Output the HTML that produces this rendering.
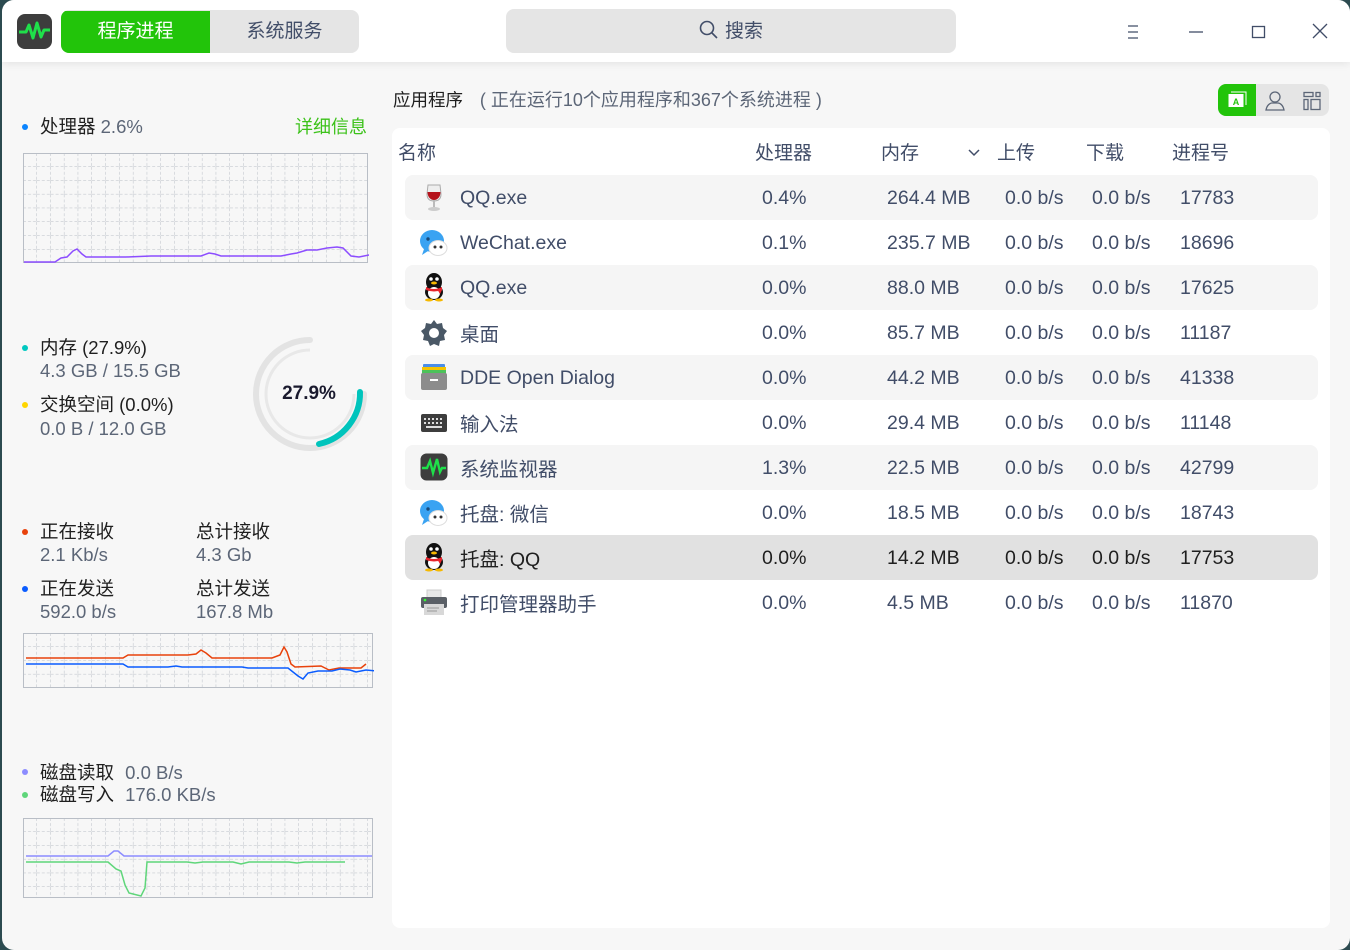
<!DOCTYPE html>
<html><head><meta charset="utf-8"><style>
*{margin:0;padding:0;box-sizing:border-box}
body{width:1350px;height:950px;background:#2c4b50;font-family:"Liberation Sans","Noto Sans CJK SC",sans-serif;position:relative;overflow:hidden}
.win{position:absolute;left:2px;top:0;width:1348px;height:950px;background:#f7f7f7;border-radius:12px;overflow:hidden}
.hdr{position:absolute;left:0;top:0;width:100%;height:62px;background:#fff;box-shadow:0 2px 8px rgba(0,0,0,.08)}
.a{position:absolute;white-space:nowrap}
.dot{position:absolute;width:6px;height:6px;border-radius:50%}
.lbl{font-size:18.5px;color:#1f1f1f}
.sub{font-size:18.5px;color:#5c6677}
.card{position:absolute;left:390px;top:128px;width:938px;height:800px;background:#fff;border-radius:8px}
.th{font-size:19px;color:#414d68;top:138px}
.row{position:absolute;left:403px;width:913px;height:45px;border-radius:8px}
.c{position:absolute;font-size:19.5px;color:#414d68;white-space:nowrap}
</style></head><body>
<div class="win">
<div class="hdr">
 <svg class="a" style="left:14px;top:13px" width="37" height="37" viewBox="0 0 37 37"><rect x="1" y="1" width="35" height="35" rx="8" fill="#3d3d3d"/><path d="M3 19h7l3-7 4 13 4-15 4 14 3-7h6" stroke="#1fe04a" stroke-width="3" fill="none" stroke-linejoin="round"/></svg>
 <div class="a" style="left:59px;top:10px;width:298px;height:43px;border-radius:8px;background:#e5e5e5;overflow:hidden">
  <div class="a" style="left:0;top:1px;width:149px;height:43px;background:#22c40a;color:#fff;font-size:19px;text-align:center;line-height:41px">程序进程</div>
  <div class="a" style="left:149px;top:1px;width:149px;height:43px;color:#414d68;font-size:19px;text-align:center;line-height:41px">系统服务</div>
 </div>
 <div class="a" style="left:504px;top:9px;width:450px;height:44px;border-radius:8px;background:#e5e5e5;color:#414d68;font-size:19px;line-height:46px;text-align:center">
  <svg width="20" height="20" viewBox="0 0 20 20" style="vertical-align:-3px;margin-right:6px"><circle cx="8" cy="8" r="6.5" stroke="#414d68" stroke-width="1.6" fill="none"/><path d="M13 13l5 5" stroke="#414d68" stroke-width="1.6"/></svg>搜索</div>
 <svg class="a" style="left:1120px;top:22px" width="20" height="20"><path d="M6 4h10M6 10h10M6 16h10" stroke="#414d68" stroke-width="1.3"/></svg>
 <svg class="a" style="left:1184px;top:22px" width="20" height="20"><path d="M3 10h14" stroke="#414d68" stroke-width="1.3"/></svg>
 <svg class="a" style="left:1247px;top:22px" width="20" height="20"><rect x="3.5" y="4.5" width="12" height="11" stroke="#414d68" stroke-width="1.3" fill="none"/></svg>
 <svg class="a" style="left:1308px;top:21px" width="20" height="20"><path d="M3 3l14 14M17 3L3 17" stroke="#414d68" stroke-width="1.3"/></svg>
</div>

<!-- left panel -->
<div class="dot" style="left:20px;top:124px;background:#0a84ff"></div>
<div class="a lbl" style="left:38px;top:113px">处理器 <span style="color:#5c6677">2.6%</span></div>
<div class="a" style="left:293px;top:113px;font-size:18px;color:#3cc21a">详细信息</div>
<svg class="a" style="left:21px;top:153px" width="346" height="111">
 <defs><pattern id="g" width="13.8" height="13.8" patternUnits="userSpaceOnUse"><path d="M13.8 0V13.8M0 13.8H13.8" stroke="#b9bec6" stroke-width="1" stroke-dasharray="3 2" fill="none"/></pattern></defs>
 <rect x="0.5" y="0.5" width="344" height="109" fill="url(#g)" stroke="#b9bec6"/>
 <path d="M1 109H32l6-4 6-1 6-6 4-2 5 5 4 3h40l25-1h50l8-3 6 1 6 2h60l10-2 6-1 10-3h10l10-2 10-1 6 1 8 8 8 1 10-2h14" stroke="#8c4dff" stroke-width="1.5" fill="none"/>
</svg>

<div class="dot" style="left:20px;top:345px;background:#00c8c0"></div>
<div class="a lbl" style="left:38px;top:334px">内存 (27.9%)</div>
<div class="a sub" style="left:38px;top:360px">4.3 GB / 15.5 GB</div>
<div class="dot" style="left:20px;top:402px;background:#ffd600"></div>
<div class="a lbl" style="left:38px;top:391px">交换空间 (0.0%)</div>
<div class="a sub" style="left:38px;top:418px">0.0 B / 12.0 GB</div>
<svg class="a" style="left:248px;top:334px" width="120" height="120" viewBox="0 0 120 120">
 <path d="M60 6A54 54 0 1 0 114 60" stroke="#e3e3e3" stroke-width="6" fill="none" stroke-linecap="round"/>
 <path d="M60 16A44 44 0 1 0 104 60" stroke="#e8e8e8" stroke-width="3" fill="none"/>
 <path d="M110 58A52 52 0 0 1 69 110" stroke="#00c4bc" stroke-width="6" fill="none" stroke-linecap="round"/>
 <text x="59" y="65" text-anchor="middle" font-size="19" font-weight="bold" fill="#1a1a2e" font-family="Liberation Sans">27.9%</text>
</svg>

<div class="dot" style="left:20px;top:529px;background:#e8420c"></div>
<div class="a lbl" style="left:38px;top:518px">正在接收</div>
<div class="a sub" style="left:38px;top:544px">2.1 Kb/s</div>
<div class="a lbl" style="left:194px;top:518px">总计接收</div>
<div class="a sub" style="left:194px;top:544px">4.3 Gb</div>
<div class="dot" style="left:20px;top:586px;background:#0a5cff"></div>
<div class="a lbl" style="left:38px;top:575px">正在发送</div>
<div class="a sub" style="left:38px;top:601px">592.0 b/s</div>
<div class="a lbl" style="left:194px;top:575px">总计发送</div>
<div class="a sub" style="left:194px;top:601px">167.8 Mb</div>
<svg class="a" style="left:21px;top:633px" width="351" height="56">
 <rect x="0.5" y="0.5" width="349" height="54" fill="url(#g)" stroke="#b9bec6"/>
 <path d="M3 25H100l5-3h60l8-1 5-4 5 3 6 5h60l8-3 4-8 3 5 4 12 4 3 26-1 8 4 10-2h22l5-4" stroke="#e8420c" stroke-width="1.5" fill="none"/>
 <path d="M3 31H100l5 3h40l8-1 6 1h60l6 1h40l10 8 5 3 5-6 10-2h14l8-2 10 1 6 2 10-2 10 1h18" stroke="#0a5cff" stroke-width="1.5" fill="none"/>
</svg>

<div class="dot" style="left:20px;top:769px;background:#8c8cff"></div>
<div class="a lbl" style="left:38px;top:759px">磁盘读取 <span style="color:#5c6677;margin-left:6px">0.0 B/s</span></div>
<div class="dot" style="left:20px;top:792px;background:#5fd67a"></div>
<div class="a lbl" style="left:38px;top:781px">磁盘写入 <span style="color:#5c6677;margin-left:6px">176.0 KB/s</span></div>
<svg class="a" style="left:21px;top:818px" width="351" height="81">
 <rect x="0.5" y="0.5" width="349" height="79" fill="url(#g)" stroke="#b9bec6"/>
 <path d="M3 38H85l6-5h4l6 5h248" stroke="#8c8cff" stroke-width="1.5" fill="none"/>
 <path d="M3 44H85l8 7 5 2 4 14 4 8 12 3 4-8 2-26h40l8 1 8-1h30l8 2 8-2h40l8 1 8-1h40" stroke="#5fd67a" stroke-width="1.5" fill="none"/>
</svg>

<!-- right -->
<div class="a" style="left:391px;top:86px;font-size:17.5px;color:#1f1f1f">应用程序 <span style="color:#5c6677;margin-left:12px;font-size:18px">( 正在运行10个应用程序和367个系统进程 )</span></div>
<div class="a" style="left:1216px;top:84px;width:111px;height:32px;border-radius:8px;background:#e5e5e5;overflow:hidden">
 <div class="a" style="left:0;top:0;width:38px;height:32px;background:#22c40a"></div>
 <svg class="a" style="left:10px;top:7px" width="20" height="18"><rect x="0.5" y="3" width="15" height="13" fill="#fff"/><path d="M3 1h15v13" stroke="#fff" fill="none"/><text x="8" y="14" text-anchor="middle" font-size="9" fill="#22c40a" font-family="Liberation Sans" font-weight="bold">A</text></svg>
 <svg class="a" style="left:46px;top:6px" width="22" height="22"><circle cx="11" cy="7" r="5" stroke="#5c6677" stroke-width="1.3" fill="none"/><path d="M2 20c1-5 4-7 6-7h6c2 0 5 2 6 7z" stroke="#5c6677" stroke-width="1.3" fill="none"/></svg>
 <svg class="a" style="left:84px;top:7px" width="20" height="20"><rect x="2" y="1.5" width="9" height="4" stroke="#5c6677" stroke-width="1.3" fill="none"/><rect x="14" y="1.5" width="4" height="4" stroke="#5c6677" stroke-width="1.3" fill="none"/><rect x="2" y="8.5" width="4" height="10" stroke="#5c6677" stroke-width="1.3" fill="none"/><rect x="9" y="8.5" width="9" height="10" stroke="#5c6677" stroke-width="1.3" fill="none"/></svg>
</div>
<div class="card"></div>
<div class="a th" style="left:396px">名称</div>
<div class="a th" style="left:753px">处理器</div>
<div class="a th" style="left:879px">内存</div>
<svg class="a" style="left:964px;top:144px" width="16" height="16"><path d="M3 6l5 5 5-5" stroke="#414d68" stroke-width="1.5" fill="none"/></svg>
<div class="a th" style="left:995px">上传</div>
<div class="a th" style="left:1084px">下载</div>
<div class="a th" style="left:1170px">进程号</div>

<div class="row" style="top:175px;background:#f5f5f5"></div>
<div class="row" style="top:265px;background:#f5f5f5"></div>
<div class="row" style="top:355px;background:#f5f5f5"></div>
<div class="row" style="top:445px;background:#f5f5f5"></div>
<div class="row" style="top:535px;background:#e1e1e1"></div>

<!-- icons -->
<svg class="a" style="left:418px;top:183px" width="28" height="30"><path d="M8 2h12l1 9c0 5-3 7-7 7s-7-2-7-7z" fill="#eee" stroke="#aaa"/><path d="M7.5 9h13c0 5-3 8-6.5 8S7.5 14 7.5 9z" fill="#b5121b"/><rect x="13" y="17" width="2" height="7" fill="#bbb"/><ellipse cx="14" cy="26" rx="6" ry="2" fill="#ccc"/></svg>
<svg class="a" style="left:417px;top:228px" width="30" height="30"><ellipse cx="13" cy="13" rx="12" ry="11" fill="#3aa3f2"/><path d="M5 21l-2 6 6-4z" fill="#3aa3f2"/><ellipse cx="19" cy="20" rx="9" ry="7.5" fill="#fff" stroke="#ddd"/><circle cx="16" cy="19" r="1.5" fill="#333"/><circle cx="22" cy="19" r="1.5" fill="#333"/><circle cx="9" cy="11" r="1.7" fill="#1a4a7a"/></svg>
<svg class="a" style="left:419px;top:272px" width="26" height="30"><ellipse cx="13" cy="10" rx="8" ry="9" fill="#111"/><ellipse cx="13" cy="20" rx="9" ry="8" fill="#111"/><ellipse cx="13" cy="21" rx="6" ry="6" fill="#fff"/><path d="M5 15q8 4 16 0v3q-8 3-16 0z" fill="#e8242c"/><path d="M16 17l3 5 2-4z" fill="#e8242c"/><ellipse cx="13" cy="11" rx="3" ry="1.5" fill="#f5b800"/><circle cx="10" cy="7" r="1.8" fill="#fff"/><circle cx="16" cy="7" r="1.8" fill="#fff"/><ellipse cx="8" cy="28" rx="4" ry="1.5" fill="#f5b800"/><ellipse cx="18" cy="28" rx="4" ry="1.5" fill="#f5b800"/></svg>
<svg class="a" style="left:418px;top:319px" width="28" height="28" viewBox="0 0 28 28"><path d="M14 1l3 4 5-1 1 5 4 3-3 4 1 5-5 1-1 5-5-2-4 2-2-5-5-1 1-5-3-4 4-3 1-5 5 1z" fill="#4a5866"/><circle cx="14" cy="14" r="5" fill="#fff"/></svg>
<svg class="a" style="left:418px;top:362px" width="28" height="30"><rect x="3" y="2" width="22" height="4" rx="1" fill="#4a8ee8"/><rect x="2" y="5" width="24" height="4" fill="#f5c400"/><rect x="2" y="8" width="24" height="4" fill="#4cc25a"/><rect x="1" y="11" width="26" height="17" rx="2" fill="#8c8c8c"/><rect x="10" y="17" width="8" height="2" fill="#fff"/></svg>
<svg class="a" style="left:418px;top:412px" width="28" height="22"><rect x="1" y="2" width="26" height="18" rx="2" fill="#3d3d3d"/><g fill="#ddd"><rect x="4" y="6" width="2" height="2"/><rect x="8" y="6" width="2" height="2"/><rect x="12" y="6" width="2" height="2"/><rect x="16" y="6" width="2" height="2"/><rect x="20" y="6" width="2" height="2"/><rect x="4" y="10" width="2" height="2"/><rect x="8" y="10" width="2" height="2"/><rect x="12" y="10" width="2" height="2"/><rect x="16" y="10" width="2" height="2"/><rect x="20" y="10" width="2" height="2"/><rect x="6" y="14" width="16" height="2"/></g></svg>
<svg class="a" style="left:418px;top:453px" width="28" height="28"><rect x="0.5" y="0.5" width="27" height="27" rx="6" fill="#3d3d3d"/><path d="M2 15h5l3-7 3 12 4-14 3 13 2-4h4" stroke="#1fe04a" stroke-width="2.4" fill="none"/></svg>
<svg class="a" style="left:417px;top:498px" width="30" height="30"><ellipse cx="13" cy="13" rx="12" ry="11" fill="#3aa3f2"/><path d="M5 21l-2 6 6-4z" fill="#3aa3f2"/><ellipse cx="19" cy="20" rx="9" ry="7.5" fill="#fff" stroke="#ddd"/><circle cx="16" cy="19" r="1.5" fill="#333"/><circle cx="22" cy="19" r="1.5" fill="#333"/><circle cx="9" cy="11" r="1.7" fill="#1a4a7a"/></svg>
<svg class="a" style="left:419px;top:542px" width="26" height="30"><ellipse cx="13" cy="10" rx="8" ry="9" fill="#111"/><ellipse cx="13" cy="20" rx="9" ry="8" fill="#111"/><ellipse cx="13" cy="21" rx="6" ry="6" fill="#fff"/><path d="M5 15q8 4 16 0v3q-8 3-16 0z" fill="#e8242c"/><path d="M16 17l3 5 2-4z" fill="#e8242c"/><ellipse cx="13" cy="11" rx="3" ry="1.5" fill="#f5b800"/><circle cx="10" cy="7" r="1.8" fill="#fff"/><circle cx="16" cy="7" r="1.8" fill="#fff"/><ellipse cx="8" cy="28" rx="4" ry="1.5" fill="#f5b800"/><ellipse cx="18" cy="28" rx="4" ry="1.5" fill="#f5b800"/></svg>
<svg class="a" style="left:418px;top:589px" width="28" height="28"><rect x="7" y="1" width="14" height="8" fill="#e8e8e8" stroke="#ccc"/><rect x="1" y="8" width="26" height="11" rx="2" fill="#5a5f66"/><circle cx="5" cy="11" r="1.3" fill="#3f3"/><rect x="4" y="15" width="20" height="11" fill="#d8d8d8"/><path d="M7 19h12M7 22h10" stroke="#999"/></svg>

<div class="c" style="left:458px;top:187px">QQ.exe</div>
<div class="c" style="left:458px;top:232px">WeChat.exe</div>
<div class="c" style="left:458px;top:277px">QQ.exe</div>
<div class="c" style="left:458px;top:318px">桌面</div>
<div class="c" style="left:458px;top:367px">DDE Open Dialog</div>
<div class="c" style="left:458px;top:408px">输入法</div>
<div class="c" style="left:458px;top:453px">系统监视器</div>
<div class="c" style="left:458px;top:498px">托盘: 微信</div>
<div class="c" style="left:458px;top:543px;color:#1f1f1f">托盘: QQ</div>
<div class="c" style="left:458px;top:588px">打印管理器助手</div>

<div class="c" style="left:760px;top:187px">0.4%</div><div class="c" style="left:885px;top:187px">264.4 MB</div><div class="c" style="left:1003px;top:187px">0.0 b/s</div><div class="c" style="left:1090px;top:187px">0.0 b/s</div><div class="c" style="left:1178px;top:187px">17783</div>
<div class="c" style="left:760px;top:232px">0.1%</div><div class="c" style="left:885px;top:232px">235.7 MB</div><div class="c" style="left:1003px;top:232px">0.0 b/s</div><div class="c" style="left:1090px;top:232px">0.0 b/s</div><div class="c" style="left:1178px;top:232px">18696</div>
<div class="c" style="left:760px;top:277px">0.0%</div><div class="c" style="left:885px;top:277px">88.0 MB</div><div class="c" style="left:1003px;top:277px">0.0 b/s</div><div class="c" style="left:1090px;top:277px">0.0 b/s</div><div class="c" style="left:1178px;top:277px">17625</div>
<div class="c" style="left:760px;top:322px">0.0%</div><div class="c" style="left:885px;top:322px">85.7 MB</div><div class="c" style="left:1003px;top:322px">0.0 b/s</div><div class="c" style="left:1090px;top:322px">0.0 b/s</div><div class="c" style="left:1178px;top:322px">11187</div>
<div class="c" style="left:760px;top:367px">0.0%</div><div class="c" style="left:885px;top:367px">44.2 MB</div><div class="c" style="left:1003px;top:367px">0.0 b/s</div><div class="c" style="left:1090px;top:367px">0.0 b/s</div><div class="c" style="left:1178px;top:367px">41338</div>
<div class="c" style="left:760px;top:412px">0.0%</div><div class="c" style="left:885px;top:412px">29.4 MB</div><div class="c" style="left:1003px;top:412px">0.0 b/s</div><div class="c" style="left:1090px;top:412px">0.0 b/s</div><div class="c" style="left:1178px;top:412px">11148</div>
<div class="c" style="left:760px;top:457px">1.3%</div><div class="c" style="left:885px;top:457px">22.5 MB</div><div class="c" style="left:1003px;top:457px">0.0 b/s</div><div class="c" style="left:1090px;top:457px">0.0 b/s</div><div class="c" style="left:1178px;top:457px">42799</div>
<div class="c" style="left:760px;top:502px">0.0%</div><div class="c" style="left:885px;top:502px">18.5 MB</div><div class="c" style="left:1003px;top:502px">0.0 b/s</div><div class="c" style="left:1090px;top:502px">0.0 b/s</div><div class="c" style="left:1178px;top:502px">18743</div>
<div class="c" style="left:760px;top:547px;color:#1f1f1f">0.0%</div><div class="c" style="left:885px;top:547px;color:#1f1f1f">14.2 MB</div><div class="c" style="left:1003px;top:547px;color:#1f1f1f">0.0 b/s</div><div class="c" style="left:1090px;top:547px;color:#1f1f1f">0.0 b/s</div><div class="c" style="left:1178px;top:547px;color:#1f1f1f">17753</div>
<div class="c" style="left:760px;top:592px">0.0%</div><div class="c" style="left:885px;top:592px">4.5 MB</div><div class="c" style="left:1003px;top:592px">0.0 b/s</div><div class="c" style="left:1090px;top:592px">0.0 b/s</div><div class="c" style="left:1178px;top:592px">11870</div>
</div>
</body></html>
